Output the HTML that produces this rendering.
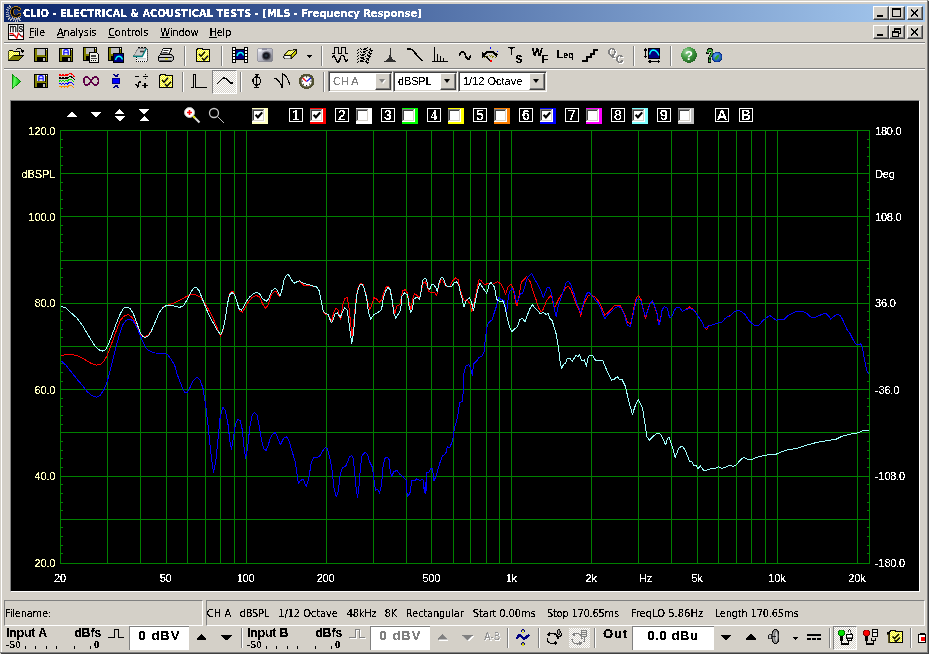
<!DOCTYPE html>
<html><head><meta charset="utf-8"><title>CLIO - ELECTRICAL &amp; ACOUSTICAL TESTS - [MLS - Frequency Response]</title>
<style>
html,body{margin:0;padding:0;background:#d4d0c8;}
body{width:929px;height:654px;position:relative;overflow:hidden;background:#d4d0c8;font-family:"Liberation Sans","DejaVu Sans",sans-serif;font-size:11px;color:#000;}
.a{position:absolute;}
.t{position:absolute;white-space:nowrap;line-height:1;}
.ui,.b12,.b13,.sb,.combo span{filter:url(#crisp);}
.ui{font-family:"DejaVu Sans Condensed","Liberation Sans",sans-serif;font-size:11px;}
.sepv{position:absolute;width:1px;background:#808080;border-right:1px solid #fff;}
.seph{position:absolute;height:1px;background:#808080;border-bottom:1px solid #fff;}
.btn{position:absolute;width:14px;height:12px;background:#d4d0c8;border:1px solid;border-color:#fff #404040 #404040 #fff;box-shadow:inset -1px -1px 0 #808080;}
.white{position:absolute;background:#fff;border-top:1px solid #808080;border-left:1px solid #808080;}
.b13{font-family:"Liberation Sans",sans-serif;font-weight:bold;font-size:13px;}
.b12{font-family:"Liberation Sans",sans-serif;font-weight:bold;font-size:12px;}
.sb{font-family:"Liberation Serif",serif;font-weight:bold;font-size:11px;}
.combo{position:absolute;height:19px;background:#fff;border:1px solid;border-color:#808080 #fff #fff #808080;box-shadow:inset 1px 1px 0 #404040, inset -1px -1px 0 #d4d0c8;}
.cbtn{position:absolute;top:1px;right:1px;width:14px;height:15px;background:#d4d0c8;border:1px solid;border-color:#fff #404040 #404040 #fff;box-shadow:inset -1px -1px 0 #808080;}
.cbtn i{position:absolute;left:3px;top:5px;width:0;height:0;border-left:3.5px solid transparent;border-right:3.5px solid transparent;border-top:4px solid #000;}
.pressed{position:absolute;border:1px solid;border-color:#808080 #fff #fff #808080;background-color:#fff;background-image:linear-gradient(45deg,#d4d0c8 25%,transparent 25%,transparent 75%,#d4d0c8 75%),linear-gradient(45deg,#d4d0c8 25%,transparent 25%,transparent 75%,#d4d0c8 75%);background-size:2px 2px;background-position:0 0,1px 1px;}
svg{position:absolute;overflow:visible;}
u{text-decoration:underline;text-underline-offset:1px;text-decoration-thickness:1px;}
</style></head><body><div id="root" style="position:absolute;left:0;top:0;width:929px;height:654px;will-change:transform;">

<svg width="0" height="0" style="position:absolute"><defs><filter id="crisp" x="-5%" y="-25%" width="110%" height="150%" color-interpolation-filters="sRGB"><feComponentTransfer><feFuncA type="discrete" tableValues="0 0 1 1 1"/></feComponentTransfer></filter></defs></svg>
<div class="a" style="left:0;top:0;width:927px;height:652px;border-right:1px solid #808080;border-bottom:1px solid #808080;box-shadow:1px 1px 0 #404040;"></div>
<div class="a" style="left:1px;top:1px;width:925px;height:650px;border-left:1px solid #fff;border-top:1px solid #fff;"></div>
<div class="a" style="left:4px;top:4px;width:921px;height:18px;background:linear-gradient(to right,#0a246a,#a6caf0);"></div>
<div class="t ui" style="left:23px;top:8px;color:#fff;font-weight:bold;letter-spacing:0.043px" id="title">CLIO - ELECTRICAL &amp; ACOUSTICAL TESTS - [MLS - Frequency Response]</div>
<div class="btn" style="left:873px;top:6px;"></div>
<div class="btn" style="left:873px;top:25px;"></div>
<div class="btn" style="left:889px;top:6px;"></div>
<div class="btn" style="left:889px;top:25px;"></div>
<div class="btn" style="left:907px;top:6px;"></div>
<div class="btn" style="left:907px;top:25px;"></div>
<div class="t ui" style="left:29px;top:27px;letter-spacing:-0.125px" id="m0"><u>F</u>ile</div>
<div class="t ui" style="left:57px;top:27px;letter-spacing:-0.188px" id="m1"><u>A</u>nalysis</div>
<div class="t ui" style="left:108px;top:27px;letter-spacing:-0.075px" id="m2"><u>C</u>ontrols</div>
<div class="t ui" style="left:160.3px;top:27px;letter-spacing:-0.167px" id="m3"><u>W</u>indow</div>
<div class="t ui" style="left:209.5px;top:27px;letter-spacing:-0.275px" id="m4"><u>H</u>elp</div>
<div class="seph" style="left:4px;top:42px;width:921px;"></div>
<div class="seph" style="left:4px;top:68px;width:921px;"></div>
<div class="sepv" style="left:184px;top:46px;height:20px;"></div>
<div class="sepv" style="left:221px;top:46px;height:20px;"></div>
<div class="sepv" style="left:321px;top:46px;height:20px;"></div>
<div class="sepv" style="left:633px;top:46px;height:20px;"></div>
<div class="sepv" style="left:670px;top:46px;height:20px;"></div>
<div class="sepv" style="left:182px;top:72px;height:20px;"></div>
<div class="sepv" style="left:240px;top:72px;height:20px;"></div>
<div class="sepv" style="left:323px;top:72px;height:20px;"></div>
<div class="pressed" style="left:212px;top:70px;width:23px;height:22px;"></div>
<div class="combo" style="left:328px;top:71px;width:63px;"><span class="t" style="left:4px;top:4px;letter-spacing:0px;color:#808080;font-size:11px;" id="c1">CH A</span><div class="cbtn" style="background:#d4d0c8"><i style="border-top-color:#fff;left:4px;top:6px"></i><i style="border-top-color:#808080"></i></div></div>
<div class="combo" style="left:393px;top:71px;width:63px;"><span class="t" style="left:4px;top:4px;letter-spacing:-0.15px;font-size:11px;" id="c2">dBSPL</span><div class="cbtn"><i></i></div></div>
<div class="combo" style="left:458px;top:71px;width:87px;"><span class="t" style="left:4px;top:4px;font-size:11px;" id="c3">1/12 Octave</span><div class="cbtn"><i></i></div></div>
<div class="a" style="left:10px;top:100px;width:908px;height:491px;background:#000;border-left:1px solid #808080;border-top:1px solid #808080;border-right:1px solid #fff;border-bottom:1px solid #fff;box-sizing:content-box;width:908px;height:490px;"></div>
<svg style="left:0;top:0" width="929" height="654" viewBox="0 0 929 654">
<g shape-rendering="crispEdges" stroke="#008000" stroke-width="1" fill="none">
<path d="M60.5 130V564"/>
<path d="M107.5 130V564"/>
<path d="M140.5 130V564"/>
<path d="M166.5 130V564"/>
<path d="M187.5 130V564"/>
<path d="M205.5 130V564"/>
<path d="M220.5 130V564"/>
<path d="M234.5 130V564"/>
<path d="M246.5 130V564"/>
<path d="M326.5 130V564"/>
<path d="M373.5 130V564"/>
<path d="M406.5 130V564"/>
<path d="M431.5 130V564"/>
<path d="M453.5 130V564"/>
<path d="M470.5 130V564"/>
<path d="M486.5 130V564"/>
<path d="M499.5 130V564"/>
<path d="M511.5 130V564"/>
<path d="M591.5 130V564"/>
<path d="M638.5 130V564"/>
<path d="M671.5 130V564"/>
<path d="M697.5 130V564"/>
<path d="M718.5 130V564"/>
<path d="M736.5 130V564"/>
<path d="M751.5 130V564"/>
<path d="M765.5 130V564"/>
<path d="M777.5 130V564"/>
<path d="M857.5 130V564"/>
<path d="M869.5 130V564"/>
<path d="M60 130.5H870"/>
<path d="M60 173.5H870"/>
<path d="M60 216.5H870"/>
<path d="M60 260.5H870"/>
<path d="M60 303.5H870"/>
<path d="M60 346.5H870"/>
<path d="M60 389.5H870"/>
<path d="M60 432.5H870"/>
<path d="M60 476.5H870"/>
<path d="M60 519.5H870"/>
<path d="M60 563.5H870"/>
<path d="M60 139.5H63M867 139.5H870"/>
<path d="M60 147.5H63M867 147.5H870"/>
<path d="M60 156.5H63M867 156.5H870"/>
<path d="M60 165.5H63M867 165.5H870"/>
<path d="M60 182.5H63M867 182.5H870"/>
<path d="M60 190.5H63M867 190.5H870"/>
<path d="M60 199.5H63M867 199.5H870"/>
<path d="M60 208.5H63M867 208.5H870"/>
<path d="M60 225.5H63M867 225.5H870"/>
<path d="M60 234.5H63M867 234.5H870"/>
<path d="M60 242.5H63M867 242.5H870"/>
<path d="M60 251.5H63M867 251.5H870"/>
<path d="M60 268.5H63M867 268.5H870"/>
<path d="M60 277.5H63M867 277.5H870"/>
<path d="M60 286.5H63M867 286.5H870"/>
<path d="M60 294.5H63M867 294.5H870"/>
<path d="M60 311.5H63M867 311.5H870"/>
<path d="M60 320.5H63M867 320.5H870"/>
<path d="M60 329.5H63M867 329.5H870"/>
<path d="M60 337.5H63M867 337.5H870"/>
<path d="M60 355.5H63M867 355.5H870"/>
<path d="M60 363.5H63M867 363.5H870"/>
<path d="M60 372.5H63M867 372.5H870"/>
<path d="M60 381.5H63M867 381.5H870"/>
<path d="M60 398.5H63M867 398.5H870"/>
<path d="M60 406.5H63M867 406.5H870"/>
<path d="M60 415.5H63M867 415.5H870"/>
<path d="M60 424.5H63M867 424.5H870"/>
<path d="M60 441.5H63M867 441.5H870"/>
<path d="M60 450.5H63M867 450.5H870"/>
<path d="M60 458.5H63M867 458.5H870"/>
<path d="M60 467.5H63M867 467.5H870"/>
<path d="M60 484.5H63M867 484.5H870"/>
<path d="M60 493.5H63M867 493.5H870"/>
<path d="M60 502.5H63M867 502.5H870"/>
<path d="M60 510.5H63M867 510.5H870"/>
<path d="M60 527.5H63M867 527.5H870"/>
<path d="M60 536.5H63M867 536.5H870"/>
<path d="M60 545.5H63M867 545.5H870"/>
<path d="M60 553.5H63M867 553.5H870"/>
</g>
<polyline points="60.8,355.4 67.2,354.5 73.3,354.7 79.5,356.5 85.6,360.0 91.7,363.7 96.3,365.2 100.9,364.2 103.9,361.1 107.0,355.7 110.0,348.1 113.9,337.4 117.7,326.7 120.7,319.8 123.8,316.3 128.1,314.5 131.5,316.8 134.5,321.3 138.3,329.8 141.4,335.1 144.4,336.6 147.5,335.4 151.3,331.3 155.2,322.1 159.0,312.9 162.8,307.6 165.1,306.0 169.7,304.5 175.8,302.2 181.9,298.9 188.0,295.8 190.0,294.4 195.4,294.8 199.9,297.0 203.8,301.6 207.6,307.8 212.2,316.2 216.8,326.9 220.6,336.0 222.9,330.5 225.2,319.2 227.5,303.9 229.4,294.5 231.3,291.7 233.6,291.7 236.6,300.9 239.7,310.8 242.3,312.3 245.0,307.8 248.9,300.9 252.7,297.0 256.5,295.5 259.6,297.0 262.6,303.9 265.7,308.5 268.3,304.7 271.0,295.5 274.1,291.7 276.4,291.7 279.4,297.0 281.7,290.9 284.0,280.2 286.3,275.2 288.3,274.4 290.9,278.7 294.0,283.3 297.0,281.8 299.3,280.7 303.9,285.3 308.5,285.3 313.9,286.3 316.9,287.1 319.2,290.9 321.2,300.9 323.0,310.0 324.6,313.9 328.8,315.4 331.4,322.0 333.4,313.9 335.7,308.2 338.0,310.0 340.7,320.0 342.6,305.5 344.6,298.6 347.2,297.5 348.7,305.5 350.2,319.2 352.2,337.6 354.0,319.2 356.0,299.3 357.9,287.9 360.9,283.3 363.2,284.8 366.3,295.5 368.6,305.5 369.8,309.7 371.6,305.5 373.9,297.8 376.2,298.6 379.3,302.4 381.9,299.3 383.9,292.5 386.2,287.1 388.5,286.3 390.8,291.7 392.6,302.4 394.6,313.9 396.9,306.2 399.9,304.7 401.5,296.3 403.0,290.2 405.3,289.9 407.6,293.2 409.1,302.4 410.9,310.0 412.5,299.3 414.4,293.5 416.7,295.1 419.5,297.8 421.3,290.2 423.2,283.3 425.2,281.8 426.7,284.8 429.0,291.7 432.0,292.5 435.1,292.9 436.6,295.5 438.9,285.6 441.2,279.5 443.5,281.8 446.1,286.3 449.6,286.8 452.7,281.0 455.7,277.9 458.0,279.5 459.9,288.6 463.1,298.6 464.6,300.9 466.9,299.3 469.9,303.9 471.9,311.9 474.5,300.9 476.8,290.2 479.1,279.5 481.4,281.0 484.5,284.8 488.3,283.3 492.9,284.1 497.5,281.8 501.3,284.1 503.6,289.4 505.6,294.0 508.2,286.3 511.2,284.4 513.5,289.4 515.4,301.6 516.9,306.2 518.9,296.3 521.2,282.5 524.2,279.5 526.5,276.4 528.0,278.7 530.3,281.8 532.6,290.2 535.7,298.6 538.7,307.8 541.0,312.3 543.3,309.3 546.4,300.9 549.4,297.0 551.4,295.1 553.0,302.4 554.5,308.5 556.3,303.9 559.4,297.8 562.4,293.2 565.5,287.9 568.3,286.3 570.9,289.4 573.9,297.8 577.0,306.2 579.3,310.0 580.8,316.2 582.3,308.5 584.6,302.4 587.7,296.3 590.7,294.8 593.8,296.3 595.0,297.1 598.8,301.6 602.0,308.5 604.8,315.2 608.0,312.5 611.6,309.0 614.6,305.4 619.9,305.0 622.5,309.5 625.0,315.5 627.4,322.0 630.4,324.2 632.0,318.0 634.5,305.0 636.4,298.0 638.7,295.3 641.0,299.5 643.2,308.5 645.5,319.0 647.7,310.0 650.0,303.0 652.3,301.0 654.5,306.0 656.8,313.0 658.3,322.7 660.6,319.0 662.1,309.9 664.3,306.5 667.3,308.4 669.6,317.9 671.9,316.7 674.1,310.7 676.4,307.4 679.4,307.4 682.4,311.4 685.4,309.9 689.2,306.9 693.0,309.0 696.0,312.9 699.0,317.5 702.0,322.0 704.3,327.3 706.5,329.5 708.8,326.0 711.8,325.0 714.8,324.2 718.6,322.7 721.6,322.7 724.6,319.0 727.6,316.7 730.6,315.2 733.1,312.9 736.9,310.2 740.7,311.1 745.3,314.5 748.3,319.8 751.4,322.9 754.5,325.5 759.1,325.2 762.1,321.3 766.7,317.5 769.8,315.5 772.8,317.8 775.9,320.1 780.5,319.5 784.3,319.1 787.3,316.0 791.2,313.7 795.7,311.7 802.6,311.4 806.5,313.2 811.0,317.2 815.6,317.2 820.2,315.2 823.3,313.7 825.6,313.2 828.6,316.0 830.6,319.1 833.2,316.8 837.0,314.5 840.1,315.2 842.4,319.1 844.7,324.4 847.0,329.4 850.0,333.6 852.3,338.2 855.4,343.8 858.4,344.6 860.7,343.8 862.3,347.3 863.8,355.7 865.3,363.4 866.9,371.0 868.4,374.1" fill="none" stroke="#ff0000" stroke-width="1" stroke-linejoin="round" shape-rendering="crispEdges"/>
<polyline points="60.8,360.6 65.7,364.9 71.8,372.6 77.9,380.2 82.5,385.4 86.3,390.7 90.9,395.0 96.3,397.3 100.1,395.3 103.9,389.9 107.0,382.3 110.8,368.0 113.9,355.7 116.9,343.5 120.0,332.8 123.0,324.4 126.1,320.3 129.9,319.4 133.0,320.6 136.0,325.9 139.1,332.8 142.9,342.0 146.7,348.9 150.6,351.5 155.2,353.0 162.0,353.1 167.4,354.2 171.2,359.6 174.6,364.9 176.6,372.6 179.6,381.0 182.7,388.4 184.7,392.2 187.3,392.2 190.3,386.9 193.0,380.9 197.0,377.4 199.9,379.9 202.9,387.9 205.5,403.8 208.3,427.7 210.9,453.5 213.5,472.4 215.8,461.5 218.2,437.6 220.2,416.7 222.8,407.4 225.4,410.8 227.8,422.7 229.8,440.6 231.4,449.5 233.3,438.6 235.3,424.7 237.7,419.3 240.3,420.7 242.3,429.7 244.1,447.5 245.7,458.1 247.7,447.5 249.7,427.7 252.0,415.7 254.2,412.4 257.0,414.7 259.2,425.7 261.2,438.6 263.6,448.5 266.2,450.5 268.1,445.6 270.5,437.6 273.1,433.6 275.5,432.6 277.9,438.6 280.5,444.6 283.5,438.6 286.4,436.6 289.0,440.6 292.4,452.5 295.4,462.5 298.4,483.3 300.4,480.4 303.3,479.4 306.3,486.9 308.9,477.4 311.3,462.5 313.7,457.5 319.3,456.9 322.2,451.5 325.2,447.5 327.3,448.9 329.6,456.6 331.9,468.8 333.9,487.2 336.2,497.1 338.5,490.2 340.3,473.4 342.6,467.7 345.6,466.5 347.9,461.2 349.5,456.6 351.8,455.8 353.3,458.9 354.8,473.4 356.3,490.2 357.6,497.1 358.9,487.2 360.5,467.3 362.0,455.8 365.1,452.4 367.8,455.0 369.3,461.2 372.4,467.3 373.9,479.5 375.5,490.2 377.8,489.4 379.6,493.3 381.6,484.1 383.1,465.7 384.9,458.4 386.9,457.3 388.9,458.4 390.0,468.8 391.5,476.9 393.8,471.9 396.9,470.3 399.9,474.2 403.0,476.5 406.0,480.3 407.3,496.3 409.9,493.3 411.9,480.3 415.2,480.7 416.7,478.7 419.8,480.3 422.9,479.5 424.4,492.5 425.5,482.6 425.9,494.0 426.7,472.6 429.0,471.9 430.5,468.8 432.5,468.5 433.9,481.0 435.9,476.5 438.1,468.8 440.4,461.2 442.7,455.8 445.8,453.5 447.3,446.6 449.6,447.7 452.7,440.5 454.2,429.1 456.5,421.4 458.1,413.4 459.6,402.7 462.3,401.2 463.4,390.5 463.9,373.6 465.7,366.0 468.8,364.5 471.1,369.8 472.3,375.2 473.7,363.7 476.4,361.4 478.7,357.6 481.8,356.5 484.1,351.5 485.2,340.6 487.2,325.3 489.8,321.5 492.1,320.0 494.4,312.3 496.7,305.5 499.0,297.0 501.0,299.3 504.3,300.9 506.6,313.1 507.7,302.4 509.2,292.5 512.0,288.6 514.3,291.7 516.6,302.4 518.9,298.6 520.4,293.2 522.7,293.2 525.0,285.6 527.3,277.9 531.6,273.3 534.9,279.5 538.0,284.8 540.3,289.4 543.3,297.8 545.6,291.7 547.2,287.9 549.4,287.6 551.0,291.7 553.0,300.9 554.8,311.6 556.3,316.9 557.9,307.0 560.9,298.6 564.0,289.4 566.3,282.5 568.6,281.3 570.9,284.8 573.9,293.2 577.0,303.9 579.3,308.5 580.8,313.1 582.3,307.0 584.6,299.3 586.9,293.2 589.2,292.5 591.5,295.5 594.6,298.6 595.0,300.1 598.0,302.4 601.0,309.2 603.3,315.2 604.8,319.0 607.8,314.5 611.6,311.4 615.3,307.7 618.4,306.2 621.4,308.4 624.4,315.2 627.4,325.0 630.4,327.0 631.9,319.7 634.2,309.2 636.4,300.1 638.7,298.6 641.0,300.9 643.2,309.9 645.5,316.7 647.7,310.7 650.0,303.9 652.3,300.9 654.5,305.4 656.8,312.2 659.0,325.0 660.6,319.7 662.1,309.9 664.3,306.5 667.3,308.4 669.6,317.9 671.9,316.7 674.1,310.7 676.4,307.4 679.4,307.4 682.4,311.4 685.4,309.9 689.2,308.4 693.0,309.5 696.0,312.9 699.0,317.5 702.0,322.0 704.3,327.3 706.5,328.0 708.8,325.0 711.8,325.0 714.8,324.2 718.6,322.7 721.6,322.7 724.6,319.0 727.6,316.7 730.0,316.0 733.1,312.9 736.9,310.2 740.7,311.1 745.3,314.5 748.3,319.8 751.4,322.9 754.5,325.5 759.1,325.2 762.1,321.3 766.7,317.5 769.8,315.5 772.8,317.8 775.9,320.1 780.5,319.5 784.3,319.1 787.3,316.0 791.2,313.7 795.7,311.7 802.6,311.4 806.5,313.2 811.0,317.2 815.6,317.2 820.2,315.2 823.3,313.7 825.6,313.2 828.6,316.0 830.6,319.1 833.2,316.8 837.0,314.5 840.1,315.2 842.4,319.1 844.7,324.4 847.0,329.4 850.0,333.6 852.3,338.2 855.4,343.8 858.4,344.6 860.7,343.8 862.3,347.3 863.8,355.7 865.3,363.4 866.9,371.0 868.4,374.1" fill="none" stroke="#0000ff" stroke-width="1" stroke-linejoin="round" shape-rendering="crispEdges"/>
<polyline points="60.8,306.1 65.7,308.0 70.3,312.2 76.4,317.5 82.5,325.5 88.6,335.9 94.8,345.8 98.6,349.6 102.1,351.2 105.5,349.6 108.5,344.3 112.3,334.3 116.2,323.6 120.7,312.9 123.8,308.0 126.9,307.1 129.9,308.3 133.0,312.9 136.8,322.9 139.9,332.0 142.9,336.6 145.2,337.4 148.3,335.9 151.3,331.3 155.2,322.1 159.0,312.9 162.8,307.6 166.6,305.3 171.2,305.0 175.8,306.5 179.6,307.3 183.4,306.0 186.5,300.7 189.6,294.6 193.1,288.6 196.1,287.1 199.2,290.9 202.2,298.6 205.3,306.2 208.3,313.9 212.9,322.3 217.5,330.7 220.6,334.5 222.9,329.9 225.2,319.2 227.5,303.9 229.4,295.1 232.0,292.5 234.3,294.4 236.6,300.9 238.9,308.5 241.2,310.4 243.5,307.0 246.6,300.9 249.6,297.0 253.5,293.5 256.5,292.2 259.6,294.0 262.6,298.6 266.1,301.3 268.7,298.6 271.8,290.9 274.9,288.2 277.2,290.2 279.9,296.0 281.7,290.9 284.0,280.2 286.3,275.2 288.3,274.4 290.9,278.7 294.0,283.3 297.0,281.8 299.3,280.7 303.1,283.3 309.3,284.8 313.9,286.3 316.9,287.1 319.2,290.9 321.2,300.9 323.0,310.0 324.6,312.8 328.1,314.6 331.4,323.0 333.4,319.2 334.9,313.9 337.2,312.8 340.3,317.4 342.6,311.6 344.9,307.8 347.2,310.0 349.5,326.9 351.8,343.4 353.7,331.5 355.3,310.0 357.1,293.2 359.4,285.6 361.7,284.1 364.0,287.9 366.6,297.8 368.6,313.1 370.6,319.2 373.9,314.6 377.8,312.8 381.6,309.3 383.1,299.3 385.4,291.7 387.7,287.4 390.0,289.4 392.3,300.9 393.8,313.1 395.6,318.0 398.4,313.9 400.7,309.3 401.9,296.3 404.5,292.9 407.6,295.1 409.1,307.0 410.9,312.3 412.5,308.5 413.7,299.3 416.7,297.0 419.5,299.3 421.0,291.7 422.6,281.0 424.4,278.2 426.7,279.2 427.8,287.9 429.7,289.4 431.3,284.8 433.6,284.4 435.9,287.9 437.4,291.7 439.4,281.0 441.2,277.6 443.5,278.2 445.8,285.6 448.9,287.1 451.9,286.3 454.2,282.5 456.5,281.8 458.8,284.8 460.3,292.5 462.3,299.3 463.8,307.0 466.1,300.9 469.5,297.5 471.5,302.4 473.5,310.8 475.3,300.9 477.6,290.2 479.9,283.3 482.9,287.9 486.8,293.2 489.1,284.8 491.0,282.5 494.4,287.1 496.7,299.3 499.8,301.6 502.8,300.9 505.1,307.0 507.4,319.2 509.7,326.9 511.7,331.9 514.3,329.2 517.3,326.9 519.6,320.0 522.7,318.1 525.0,322.3 527.3,315.4 530.3,307.8 532.3,304.7 534.9,307.8 538.0,310.8 540.3,313.9 543.3,312.3 546.4,314.6 548.4,313.1 549.4,317.7 552.2,320.7 554.0,326.9 556.3,334.5 557.6,343.0 558.7,349.2 560.2,362.9 561.6,368.3 563.6,364.2 565.4,363.7 566.9,359.1 569.7,358.3 572.4,361.4 575.8,355.3 578.1,356.5 579.6,354.5 581.6,360.6 584.2,359.9 586.5,366.8 587.7,358.3 589.6,355.3 592.6,355.0 595.4,360.3 602.8,360.8 607.1,371.0 611.4,380.2 614.6,379.0 617.4,376.4 618.9,379.2 622.1,379.6 625.3,386.0 628.5,399.9 632.4,414.5 635.4,405.3 638.2,399.5 642.4,407.4 644.6,421.3 646.7,436.3 649.5,440.2 653.2,436.3 657.4,433.1 660.6,434.2 663.9,440.6 665.6,444.9 667.5,438.5 669.2,437.4 672.4,447.0 675.2,457.3 678.8,448.1 682.1,446.0 685.3,450.3 687.4,455.6 689.6,462.0 691.7,461.6 693.8,465.9 696.0,465.2 698.1,468.5 700.3,465.9 703.5,470.2 706.7,470.2 711.0,468.5 715.2,468.5 718.5,466.7 721.7,468.5 724.9,467.5 729.8,465.4 733.1,466.5 736.3,464.9 739.5,460.9 743.6,457.3 747.6,459.2 751.6,459.6 755.7,457.6 765.4,455.2 777.5,453.9 781.5,451.7 789.6,449.2 796.0,448.8 805.7,445.5 817.0,442.3 825.1,441.0 836.4,439.1 841.3,436.6 849.3,434.2 857.7,432.9 862.3,431.0 868.7,430.3" fill="none" stroke="#a0ffff" stroke-width="1" stroke-linejoin="round" shape-rendering="crispEdges"/>
<g font-family="Liberation Sans, sans-serif" font-size="11px" letter-spacing="-0.2" filter="url(#crisp)">
<text x="55.4" y="134.6" text-anchor="end" fill="#ffffc0" letter-spacing="-0.1">120.0</text>
<text x="875" y="134.6" fill="#fff">180.0</text>
<text x="55.4" y="221.0" text-anchor="end" fill="#ffffc0" letter-spacing="-0.1">100.0</text>
<text x="875" y="221.0" fill="#fff">108.0</text>
<text x="55.4" y="307.4" text-anchor="end" fill="#ffffc0" letter-spacing="-0.1">80.0</text>
<text x="875" y="307.4" fill="#fff">36.0</text>
<text x="55.4" y="393.8" text-anchor="end" fill="#ffffc0" letter-spacing="-0.1">60.0</text>
<text x="875" y="393.8" fill="#fff">-36.0</text>
<text x="55.4" y="480.2" text-anchor="end" fill="#ffffc0" letter-spacing="-0.1">40.0</text>
<text x="875" y="480.2" fill="#fff">-108.0</text>
<text x="55.4" y="566.6" text-anchor="end" fill="#ffffc0" letter-spacing="-0.1">20.0</text>
<text x="875" y="566.6" fill="#fff">-180.0</text>
<text x="55.2" y="177.8" text-anchor="end" fill="#ffffc0" letter-spacing="-0.1">dBSPL</text>
<text x="875" y="177.8" fill="#fff">Deg</text>
<text x="59.9" y="582" text-anchor="middle" fill="#fff">20</text>
<text x="165.6" y="582" text-anchor="middle" fill="#fff">50</text>
<text x="245.6" y="582" text-anchor="middle" fill="#fff">100</text>
<text x="325.6" y="582" text-anchor="middle" fill="#fff">200</text>
<text x="431.3" y="582" text-anchor="middle" fill="#fff">500</text>
<text x="511.3" y="582" text-anchor="middle" fill="#fff">1k</text>
<text x="591.2" y="582" text-anchor="middle" fill="#fff">2k</text>
<text x="645.5" y="582" text-anchor="middle" fill="#fff">Hz</text>
<text x="697.0" y="582" text-anchor="middle" fill="#fff">5k</text>
<text x="776.9" y="582" text-anchor="middle" fill="#fff">10k</text>
<text x="856.9" y="582" text-anchor="middle" fill="#fff">20k</text>
</g>
<g fill="#fff" shape-rendering="crispEdges">
<path d="M66.800 117h10.600l-5.300-5.300z"/><path d="M90.800 112h10.600l-5.300 5.300z"/>
<path d="M114.700 114.300h10.600l-5.300-5.300z"/><path d="M114.700 116h10.600l-5.300 5.300z"/>
<path d="M138.800 109h10.600l-5.300 5.300z"/><path d="M138.800 121.300h10.600l-5.300-5.300z"/>
</g>
<circle cx="189.5" cy="112.5" r="5" fill="#fff" stroke="#c0c0c0" stroke-width="1"/><path d="M187 112.5h5M189.5 110v5" stroke="#f00" stroke-width="1.6"/><path d="M193.5 116.5l6 6" stroke="#e0e0e0" stroke-width="2"/><path d="M193 116l2 2" stroke="#e0e000" stroke-width="2"/>
<circle cx="214" cy="113" r="4.5" fill="none" stroke="#c8c8c8" stroke-width="1.3"/><path d="M217.5 116.5l6.5 6.5" stroke="#c0c0c0" stroke-width="1"/>
<rect x="252" y="108" width="16" height="16" fill="#ffffc0" shape-rendering="crispEdges"/>
<g shape-rendering="crispEdges" fill="none"><rect x="252" y="109" width="13" height="13" fill="#fff"/><path d="M252.5 121V109.5H264" stroke="#808080"/><path d="M253.5 120V110.5H263" stroke="#404040"/><path d="M253 120.5H263.5V110" stroke="#d4d0c8"/></g>
<path d="M255.6 114.7l2.300 2.600l4.300-4.900" stroke="#000" stroke-width="2.100" fill="none"/>
<rect x="289.5" y="108.5" width="13" height="13" fill="#000" stroke="#fff" shape-rendering="crispEdges"/>
<text x="296" y="120.1" text-anchor="middle" fill="#fff" filter="url(#crisp)" font-family="Liberation Sans, sans-serif" font-size="14px" font-weight="normal" stroke="#fff" stroke-width="0.15">1</text>
<rect x="310" y="108" width="16" height="16" fill="#ff0000" shape-rendering="crispEdges"/>
<g shape-rendering="crispEdges" fill="none"><rect x="310" y="109" width="13" height="13" fill="#fff"/><path d="M310.5 121V109.5H322" stroke="#808080"/><path d="M311.5 120V110.5H321" stroke="#404040"/><path d="M311 120.5H321.5V110" stroke="#d4d0c8"/></g>
<path d="M313.6 114.7l2.300 2.600l4.300-4.900" stroke="#000" stroke-width="2.100" fill="none"/>
<rect x="335.5" y="108.5" width="13" height="13" fill="#000" stroke="#fff" shape-rendering="crispEdges"/>
<text x="342" y="120.1" text-anchor="middle" fill="#fff" filter="url(#crisp)" font-family="Liberation Sans, sans-serif" font-size="14px" font-weight="normal" stroke="#fff" stroke-width="0.15">2</text>
<rect x="356" y="108" width="16" height="16" fill="#ffffff" shape-rendering="crispEdges"/>
<g shape-rendering="crispEdges" fill="none"><rect x="356" y="109" width="13" height="13" fill="#fff"/><path d="M356.5 121V109.5H368" stroke="#808080"/><path d="M357.5 120V110.5H367" stroke="#404040"/><path d="M357 120.5H367.5V110" stroke="#d4d0c8"/></g>
<rect x="381.5" y="108.5" width="13" height="13" fill="#000" stroke="#fff" shape-rendering="crispEdges"/>
<text x="388" y="120.1" text-anchor="middle" fill="#fff" filter="url(#crisp)" font-family="Liberation Sans, sans-serif" font-size="14px" font-weight="normal" stroke="#fff" stroke-width="0.15">3</text>
<rect x="402" y="108" width="16" height="16" fill="#00ff00" shape-rendering="crispEdges"/>
<g shape-rendering="crispEdges" fill="none"><rect x="402" y="109" width="13" height="13" fill="#fff"/><path d="M402.5 121V109.5H414" stroke="#808080"/><path d="M403.5 120V110.5H413" stroke="#404040"/><path d="M403 120.5H413.5V110" stroke="#d4d0c8"/></g>
<rect x="427.5" y="108.5" width="13" height="13" fill="#000" stroke="#fff" shape-rendering="crispEdges"/>
<text x="434" y="120.1" text-anchor="middle" fill="#fff" filter="url(#crisp)" font-family="Liberation Serif, serif" font-size="14px" font-weight="bold" stroke="#fff" stroke-width="0">4</text>
<rect x="448" y="108" width="16" height="16" fill="#ffff00" shape-rendering="crispEdges"/>
<g shape-rendering="crispEdges" fill="none"><rect x="448" y="109" width="13" height="13" fill="#fff"/><path d="M448.5 121V109.5H460" stroke="#808080"/><path d="M449.5 120V110.5H459" stroke="#404040"/><path d="M449 120.5H459.5V110" stroke="#d4d0c8"/></g>
<rect x="473.5" y="108.5" width="13" height="13" fill="#000" stroke="#fff" shape-rendering="crispEdges"/>
<text x="480" y="120.1" text-anchor="middle" fill="#fff" filter="url(#crisp)" font-family="Liberation Sans, sans-serif" font-size="14px" font-weight="normal" stroke="#fff" stroke-width="0.15">5</text>
<rect x="494" y="108" width="16" height="16" fill="#ff8000" shape-rendering="crispEdges"/>
<g shape-rendering="crispEdges" fill="none"><rect x="494" y="109" width="13" height="13" fill="#fff"/><path d="M494.5 121V109.5H506" stroke="#808080"/><path d="M495.5 120V110.5H505" stroke="#404040"/><path d="M495 120.5H505.5V110" stroke="#d4d0c8"/></g>
<rect x="519.5" y="108.5" width="13" height="13" fill="#000" stroke="#fff" shape-rendering="crispEdges"/>
<text x="526" y="120.1" text-anchor="middle" fill="#fff" filter="url(#crisp)" font-family="Liberation Sans, sans-serif" font-size="14px" font-weight="normal" stroke="#fff" stroke-width="0.15">6</text>
<rect x="540" y="108" width="16" height="16" fill="#0000ff" shape-rendering="crispEdges"/>
<g shape-rendering="crispEdges" fill="none"><rect x="540" y="109" width="13" height="13" fill="#fff"/><path d="M540.5 121V109.5H552" stroke="#808080"/><path d="M541.5 120V110.5H551" stroke="#404040"/><path d="M541 120.5H551.5V110" stroke="#d4d0c8"/></g>
<path d="M543.6 114.7l2.300 2.600l4.300-4.900" stroke="#000" stroke-width="2.100" fill="none"/>
<rect x="565.5" y="108.5" width="13" height="13" fill="#000" stroke="#fff" shape-rendering="crispEdges"/>
<text x="572" y="120.1" text-anchor="middle" fill="#fff" filter="url(#crisp)" font-family="Liberation Sans, sans-serif" font-size="14px" font-weight="normal" stroke="#fff" stroke-width="0.15">7</text>
<rect x="586" y="108" width="16" height="16" fill="#ff00ff" shape-rendering="crispEdges"/>
<g shape-rendering="crispEdges" fill="none"><rect x="586" y="109" width="13" height="13" fill="#fff"/><path d="M586.5 121V109.5H598" stroke="#808080"/><path d="M587.5 120V110.5H597" stroke="#404040"/><path d="M587 120.5H597.5V110" stroke="#d4d0c8"/></g>
<rect x="611.5" y="108.5" width="13" height="13" fill="#000" stroke="#fff" shape-rendering="crispEdges"/>
<text x="618" y="120.1" text-anchor="middle" fill="#fff" filter="url(#crisp)" font-family="Liberation Sans, sans-serif" font-size="14px" font-weight="normal" stroke="#fff" stroke-width="0.15">8</text>
<rect x="632" y="108" width="16" height="16" fill="#80ffff" shape-rendering="crispEdges"/>
<g shape-rendering="crispEdges" fill="none"><rect x="632" y="109" width="13" height="13" fill="#fff"/><path d="M632.5 121V109.5H644" stroke="#808080"/><path d="M633.5 120V110.5H643" stroke="#404040"/><path d="M633 120.5H643.5V110" stroke="#d4d0c8"/></g>
<path d="M635.6 114.7l2.300 2.600l4.300-4.900" stroke="#000" stroke-width="2.100" fill="none"/>
<rect x="657.5" y="108.5" width="13" height="13" fill="#000" stroke="#fff" shape-rendering="crispEdges"/>
<text x="664" y="120.1" text-anchor="middle" fill="#fff" filter="url(#crisp)" font-family="Liberation Sans, sans-serif" font-size="14px" font-weight="normal" stroke="#fff" stroke-width="0.15">9</text>
<rect x="678" y="108" width="16" height="16" fill="#c0c0c0" shape-rendering="crispEdges"/>
<g shape-rendering="crispEdges" fill="none"><rect x="678" y="109" width="13" height="13" fill="#fff"/><path d="M678.5 121V109.5H690" stroke="#808080"/><path d="M679.5 120V110.5H689" stroke="#404040"/><path d="M679 120.5H689.5V110" stroke="#d4d0c8"/></g>
<rect x="715.5" y="108.5" width="13" height="13" fill="#000" stroke="#fff" shape-rendering="crispEdges"/>
<text x="722" y="120.1" text-anchor="middle" fill="#fff" filter="url(#crisp)" font-family="Liberation Sans, sans-serif" font-size="14px" font-weight="normal" stroke="#fff" stroke-width="0.15">A</text>
<rect x="739.5" y="108.5" width="13" height="13" fill="#000" stroke="#fff" shape-rendering="crispEdges"/>
<text x="746" y="120.1" text-anchor="middle" fill="#fff" filter="url(#crisp)" font-family="Liberation Sans, sans-serif" font-size="14px" font-weight="normal" stroke="#fff" stroke-width="0.15">B</text>
</svg>
<div class="a" style="left:4px;top:600px;width:198px;height:25px;border:1px solid;border-color:#808080 #fff #fff #808080;box-sizing:content-box;width:197px;height:24px;"></div>
<div class="a" style="left:206px;top:600px;width:717px;height:24px;border:1px solid;border-color:#808080 #fff #fff #808080;"></div>
<div class="t ui" style="left:5px;top:608px;letter-spacing:-0.211px" id="s0">Filename:</div>
<div class="t ui" style="left:206.8px;top:608px;letter-spacing:0.050px" id="s1">CH A</div>
<div class="t ui" style="left:239.8px;top:608px;letter-spacing:-0.320px" id="s2">dBSPL</div>
<div class="t ui" style="left:278.2px;top:608px;letter-spacing:-0.082px" id="s3">1/12 Octave</div>
<div class="t ui" style="left:346.8px;top:608px;letter-spacing:-0.320px" id="s4">48kHz</div>
<div class="t ui" style="left:384.6px;top:608px;letter-spacing:-0.100px" id="s5">8K</div>
<div class="t ui" style="left:405.8px;top:608px;letter-spacing:-0.155px" id="s6">Rectangular</div>
<div class="t ui" style="left:472.8px;top:608px;letter-spacing:-0.125px" id="s7">Start 0.00ms</div>
<div class="t ui" style="left:546.9px;top:608px;letter-spacing:-0.231px" id="s8">Stop 170.65ms</div>
<div class="t ui" style="left:630.7px;top:608px;letter-spacing:0.054px" id="s9">FreqLO 5.86Hz</div>
<div class="t ui" style="left:714.7px;top:608px;letter-spacing:-0.200px" id="s10">Length 170.65ms</div>
<div class="t b12" style="left:6px;top:627px;">Input A</div>
<div class="t b12" style="left:74.5px;top:627px;">dBfs</div>
<div class="t sb" style="left:6px;top:639px;">-50</div>
<div class="t sb" style="left:94px;top:639px;">0</div>
<div class="a" style="left:25px;top:646px;width:1px;height:3px;background:#000;"></div>
<div class="a" style="left:35px;top:646px;width:1px;height:3px;background:#000;"></div>
<div class="a" style="left:46px;top:646px;width:1px;height:3px;background:#000;"></div>
<div class="a" style="left:56px;top:646px;width:1px;height:3px;background:#000;"></div>
<div class="a" style="left:74px;top:646px;width:1px;height:3px;background:#000;"></div>
<div class="a" style="left:90px;top:646px;width:1px;height:3px;background:#000;"></div>
<div class="white" style="left:129px;top:626px;width:59px;height:23px;"></div>
<div class="t b13" style="left:129px;top:628.5px;width:61px;text-align:center;color:#000;letter-spacing:1px;">0 dBV</div>
<div class="t b12" style="left:247px;top:627px;">Input B</div>
<div class="t b12" style="left:315.5px;top:627px;">dBfs</div>
<div class="t sb" style="left:247px;top:639px;">-50</div>
<div class="t sb" style="left:335px;top:639px;">0</div>
<div class="a" style="left:266px;top:646px;width:1px;height:3px;background:#000;"></div>
<div class="a" style="left:276px;top:646px;width:1px;height:3px;background:#000;"></div>
<div class="a" style="left:287px;top:646px;width:1px;height:3px;background:#000;"></div>
<div class="a" style="left:297px;top:646px;width:1px;height:3px;background:#000;"></div>
<div class="a" style="left:315px;top:646px;width:1px;height:3px;background:#000;"></div>
<div class="a" style="left:331px;top:646px;width:1px;height:3px;background:#000;"></div>
<div class="white" style="left:370px;top:626px;width:59px;height:23px;"></div>
<div class="t b13" style="left:370px;top:628.5px;width:61px;text-align:center;color:#808080;letter-spacing:1px;">0 dBV</div>
<div class="sepv" style="left:241px;top:628px;height:20px;"></div>
<div class="sepv" style="left:507px;top:628px;height:20px;"></div>
<div class="sepv" style="left:538px;top:628px;height:20px;"></div>
<div class="sepv" style="left:594px;top:628px;height:20px;"></div>
<div class="sepv" style="left:829px;top:628px;height:20px;"></div>
<div class="sepv" style="left:910px;top:628px;height:20px;"></div>
<div class="t b13" style="left:603px;top:627px;letter-spacing:0.8px;">Out</div>
<div class="white" style="left:632px;top:626px;width:81px;height:23px;"></div>
<div class="t b13" style="left:633px;top:629px;width:80px;text-align:center;letter-spacing:0.6px;">0.0 dBu</div>
<div class="pressed" style="left:568px;top:627px;width:21px;height:20px;border-color:#d4d0c8;"></div>
<div class="pressed" style="left:833px;top:626px;width:22px;height:22px;"></div>
<svg style="left:0;top:0" width="929" height="654" viewBox="0 0 929 654">
<defs>
<filter id="crispi" filterUnits="userSpaceOnUse" x="0" y="0" width="929" height="654" color-interpolation-filters="sRGB"><feComponentTransfer><feFuncA type="discrete" tableValues="0 0 0 0 0 1 1 1 1 1"/></feComponentTransfer></filter>
<pattern id="dy" width="2" height="2" patternUnits="userSpaceOnUse"><rect width="2" height="2" fill="#ffff00"/><rect width="1" height="1" fill="#f0f0d0"/><rect x="1" y="1" width="1" height="1" fill="#f0f0d0"/></pattern>
<linearGradient id="gplay" x1="0" y1="0" x2="1" y2="0.3"><stop offset="0" stop-color="#00a000"/><stop offset="0.35" stop-color="#60ff60"/><stop offset="1" stop-color="#00b800"/></linearGradient>
<radialGradient id="ghelp" cx="0.35" cy="0.3" r="0.8"><stop offset="0" stop-color="#a0d8a0"/><stop offset="0.5" stop-color="#409840"/><stop offset="1" stop-color="#1c5c1c"/></radialGradient>
<linearGradient id="gcam" x1="0" y1="0" x2="1" y2="1"><stop offset="0" stop-color="#e8e8f0"/><stop offset="0.5" stop-color="#b8b8c4"/><stop offset="1" stop-color="#787880"/></linearGradient>
<radialGradient id="glens" cx="0.45" cy="0.45" r="0.6"><stop offset="0" stop-color="#304050"/><stop offset="0.5" stop-color="#101018"/><stop offset="1" stop-color="#505058"/></radialGradient>
<radialGradient id="gglobe" cx="0.4" cy="0.35" r="0.7"><stop offset="0" stop-color="#60b0ff"/><stop offset="1" stop-color="#0030a0"/></radialGradient>
</defs><g filter="url(#crispi)">
<g><path d="M8.5 60.5V51.5L9.5 50.5H12.5L13.5 51.5H19.5V55" fill="url(#dy)" stroke="#000"/><path d="M8.5 60.5H18.5L23.5 55.5H13.5Z" fill="#808000" stroke="#000"/><path d="M8.7 51.5V60.3L13.2 55.5V51.8Z" fill="url(#dy)"/><path d="M16.300 49.800Q19.500 46.500 22.300 50" fill="none" stroke="#000" stroke-width="1.100"/><path d="M20.300 50.500h4l-1.800 2.800z" fill="#000"/></g>
<g shape-rendering="crispEdges"><rect x="34" y="48" width="14" height="14" fill="#000"/><rect x="35" y="49" width="12" height="12" fill="#808000"/><rect x="37" y="49" width="8" height="6" fill="#c0c0c0"/><rect x="45" y="49" width="1" height="7" fill="#000"/><rect x="46" y="49" width="1" height="1" fill="#fff"/><rect x="37" y="57" width="9" height="4" fill="#000"/><rect x="43" y="58" width="2" height="3" fill="#c0c0c0"/></g>
<g shape-rendering="crispEdges"><rect x="59" y="48" width="14" height="14" fill="#000"/><rect x="60" y="49" width="12" height="12" fill="#808000"/><rect x="62" y="49" width="8" height="6" fill="#e8e8f8"/><rect x="70" y="49" width="1" height="7" fill="#000"/><rect x="71" y="49" width="1" height="1" fill="#fff"/><rect x="62" y="57" width="9" height="4" fill="#000"/><rect x="68" y="58" width="2" height="3" fill="#c0c0c0"/></g>
<path d="M63.8 55V51.5Q63.8 49.6 66 49.6Q68.2 49.6 68.2 51.5V55M63.8 52.8H68.2" stroke="#0000ff" stroke-width="1.100" fill="none"/>
<g shape-rendering="crispEdges"><rect x="83" y="47" width="14" height="14" fill="#000"/><rect x="84" y="48" width="12" height="12" fill="#808000"/><rect x="86" y="48" width="8" height="6" fill="#c0c0c0"/><rect x="94" y="48" width="1" height="7" fill="#000"/><rect x="95" y="48" width="1" height="1" fill="#fff"/><rect x="86" y="56" width="9" height="4" fill="#000"/><rect x="92" y="57" width="2" height="3" fill="#c0c0c0"/></g>
<g shape-rendering="crispEdges"><path d="M89.5 52.5H96.5L98.5 54.5V62.5H89.5Z" fill="#f0f0e8" stroke="#000"/><rect x="91" y="55" width="5" height="2" fill="#404040"/><rect x="91" y="58" width="6" height="1" fill="#404040"/><rect x="91" y="60" width="1" height="1" fill="#000"/><rect x="93" y="60" width="1" height="1" fill="#000"/><rect x="95" y="60" width="1" height="1" fill="#000"/></g>
<g shape-rendering="crispEdges"><rect x="108" y="47" width="14" height="14" fill="#000"/><rect x="109" y="48" width="12" height="12" fill="#808000"/><rect x="111" y="48" width="8" height="6" fill="#c0c0c0"/><rect x="119" y="48" width="1" height="7" fill="#000"/><rect x="120" y="48" width="1" height="1" fill="#fff"/><rect x="111" y="56" width="9" height="4" fill="#000"/><rect x="117" y="57" width="2" height="3" fill="#c0c0c0"/></g>
<rect x="113.5" y="53.5" width="10" height="9" fill="#000080" stroke="#000" shape-rendering="crispEdges"/><path d="M115.5 60Q116.5 56.2 119 56.2Q121.5 56.2 122.5 59.5" fill="none" stroke="#00ffff" stroke-width="1.4"/>
<g><path d="M136.5 57V61.5H146.5L147.5 60.5V49.5L145 48" fill="#fff" stroke="#000" stroke-dasharray="1 1"/><path d="M138 48.5H146L142 56H133.5Z" fill="#c8c8c8" stroke="#606060" stroke-width="0.6"/><path d="M133 56.5H142.2L146.2 48.8" fill="none" stroke="#008080" stroke-width="1.3"/><path d="M138 47.5h2m1 0h2m1 0h2" stroke="#000" stroke-width="1.2"/><path d="M140 51.5h4" stroke="#404040" stroke-width="1.6"/><path d="M137 58.5h9M137 60h9" stroke="#c0c0c0" stroke-width="0.8"/></g>
<g><path d="M163 48.5H171.5L169 54H160.5Z" fill="#fff" stroke="#000"/><path d="M163.5 50.5h5M162.5 52.5h5" stroke="#000" stroke-width="0.8"/><path d="M158.5 56.5L160.5 54.5H171L173.5 56.5V60L171.5 61.5H159.5L158.5 60.5Z" fill="#c8c8c8" stroke="#000"/><path d="M159 57.5H171.5" stroke="#000"/><path d="M159.500 60.500H171" stroke="#404040" stroke-width="0.800"/><rect x="165" y="58.3" width="3" height="1.4" fill="#e0e000"/><path d="M171.5 57.5l2-1.5M171.5 61l2-1.5" stroke="#000" stroke-dasharray="1 1"/></g>
<g shape-rendering="crispEdges"><path d="M196.5 49.5H197.5V48.5H202.5V49.5H209.5V61.5H196.5Z" fill="url(#dy)" stroke="#000"/></g>
<path d="M199 54l2 2.2l4-4.4M202 58l2 2.2l4-4.4" stroke="#000" stroke-width="1.400" fill="none"/>
<g shape-rendering="crispEdges"><rect x="232" y="47" width="4" height="16" fill="#000"/><rect x="244" y="47" width="4" height="16" fill="#000"/><rect x="235" y="49" width="10" height="11" fill="#000"/><rect x="236" y="50" width="8" height="9" fill="#000080"/>
<rect x="233" y="48" width="2" height="2" fill="#fff"/><rect x="245" y="48" width="2" height="2" fill="#fff"/>
<rect x="233" y="51" width="2" height="2" fill="#fff"/><rect x="245" y="51" width="2" height="2" fill="#fff"/>
<rect x="233" y="54" width="2" height="2" fill="#fff"/><rect x="245" y="54" width="2" height="2" fill="#fff"/>
<rect x="233" y="57" width="2" height="2" fill="#fff"/><rect x="245" y="57" width="2" height="2" fill="#fff"/>
<rect x="233" y="60" width="2" height="2" fill="#fff"/><rect x="245" y="60" width="2" height="2" fill="#fff"/>
</g><path d="M237 56Q238 52.5 240.5 52.5Q243 52.5 243.5 55.5" fill="none" stroke="#00ffff" stroke-width="1.4"/>
<g><rect x="257.300" y="48.300" width="15.400" height="13.400" rx="1.5" fill="url(#gcam)" stroke="#8c8c94" stroke-width="0.800"/><rect x="262" y="48" width="5" height="2" fill="#9090a0"/><circle cx="266.5" cy="56" r="4.800" fill="#70707c"/><circle cx="266.5" cy="56" r="3.800" fill="url(#glens)"/><rect x="258.500" y="49.500" width="3" height="2" fill="#f4f4f8"/></g>
<g><path d="M284 55.500L288.500 50.500L296.500 49.500L291 55.300Z" fill="url(#dy)" stroke="#000" stroke-width="0.900"/><path d="M291 55.300L296.500 49.500V53L291 59Z" fill="#e0e000" stroke="#000" stroke-width="0.900"/><path d="M284 55.500H291V59H285Q283.500 58.500 283.700 56.500Z" fill="#f4f4f4" stroke="#000" stroke-width="0.900"/></g>
<path d="M307 55h5.4l-2.7 3.2z" fill="#000"/>
<path d="M332 53.5H334.5V47.5H338.5V53.5H341.5V47.5H345.5V53.5H347.5" fill="none" stroke="#000" stroke-width="1" shape-rendering="crispEdges"/>
<path d="M332.300 57.500Q333.800 53.500 335.300 57.800T337.800 62Q339.500 62 340.300 58T342.800 55.500Q344 55.500 345 59.500T347.500 59.500" fill="none" stroke="#000" stroke-width="1.300"/>
<path d="M357.500 50.800000000000004L359.300 48.9H360.800L361.800 49.9L362.800 48.9L363.800 49.9L364.5 48.800000000000004H366.5L367.5 47.6H369L373.3 51.2" fill="none" stroke="#000" stroke-width="1" stroke-linejoin="round" stroke-dasharray="2.200 0.800"/><path d="M363.7 48.6h3l-1.500 1.600z" fill="#000"/><path d="M369.5 49.300000000000004l2.500 2.200" stroke="#000" stroke-width="1.300"/>
<path d="M357.500 53.800000000000004L359.300 51.9H360.800L361.800 52.9L362.800 51.9L363.800 52.9L363.5 51.800000000000004H365.5L366.5 50.6H368L372.3 54.2" fill="none" stroke="#000" stroke-width="1" stroke-linejoin="round" stroke-dasharray="2.200 0.800"/><path d="M362.7 51.6h3l-1.500 1.600z" fill="#000"/><path d="M368.5 52.300000000000004l2.500 2.200" stroke="#000" stroke-width="1.300"/>
<path d="M357.500 56.800000000000004L359.300 54.9H360.800L361.800 55.9L362.800 54.9L363.800 55.9L362.5 54.800000000000004H364.5L365.5 53.6H367L371.3 57.2" fill="none" stroke="#000" stroke-width="1" stroke-linejoin="round" stroke-dasharray="2.200 0.800"/><path d="M361.7 54.6h3l-1.500 1.600z" fill="#000"/><path d="M367.5 55.300000000000004l2.500 2.200" stroke="#000" stroke-width="1.300"/>
<path d="M357.500 59.800000000000004L359.300 57.9H360.800L361.800 58.9L362.800 57.9L363.800 58.9L361.5 57.800000000000004H363.5L364.5 56.6H366L370.3 60.2" fill="none" stroke="#000" stroke-width="1" stroke-linejoin="round" stroke-dasharray="2.200 0.800"/><path d="M360.7 57.6h3l-1.500 1.600z" fill="#000"/><path d="M366.5 58.300000000000004l2.500 2.200" stroke="#000" stroke-width="1.300"/>
<path d="M357.500 62.800000000000004L359.300 60.9H360.800L361.800 61.9L362.800 60.9L363.800 61.9L360.5 60.800000000000004H362.5L363.5 59.6H365L369.3 63.2" fill="none" stroke="#000" stroke-width="1" stroke-linejoin="round" stroke-dasharray="2.200 0.800"/><path d="M359.7 60.6h3l-1.500 1.600z" fill="#000"/><path d="M365.5 61.300000000000004l2.500 2.200" stroke="#000" stroke-width="1.300"/>
<path d="M383 61.8H397.5Q391.5 60.5 390.8 54V47.5H389.7V54Q389 60.5 383 61.8Z" fill="#303030"/>
<path d="M407 49.2H411.5L422.8 61.3" fill="none" stroke="#000" stroke-width="1.6"/>
<path d="M432 61.5H448M434.5 47V61M437.5 53.5V61M440.5 56V61M443.5 58V61" fill="none" stroke="#000" stroke-width="1.1" shape-rendering="crispEdges"/>
<path d="M459.2 56Q460.2 51.5 462.5 51.8Q464.5 52 465.5 55.5T468.2 59Q470 59 470.8 55" fill="none" stroke="#000" stroke-width="1.8"/>
<g><path d="M482.5 55.5Q490 47.5 497.5 55.5" fill="none" stroke="#000" stroke-width="1.8"/><path d="M482.5 52.5l5 6M487 52.5l-5 5.5M497.5 57.5l-3-3" stroke="#000" stroke-width="1.2"/><path d="M486 56l5 5.5" stroke="#000" stroke-width="1.4"/><path d="M484 58Q490 53 496 58" fill="none" stroke="#808000" stroke-dasharray="1 1"/><path d="M489 55l1.5 2l1.5-2M493 56l-1 2" stroke="#808000" stroke-width="0.8" fill="none"/><circle cx="491" cy="61" r="1.2" fill="#f00"/><path d="M482.5 51h1M485.5 49h1M490 48h1M494.5 49h1M497 51.5h1" stroke="#0000ff" stroke-width="1.2"/></g>
<text x="508.3" y="54.9" font-family="Liberation Sans, sans-serif" font-weight="bold" font-size="10.5px" fill="#000" filter="url(#crisp)" >T</text>
<text x="515.3" y="62.9" font-family="Liberation Sans, sans-serif" font-weight="bold" font-size="11px" fill="#000" filter="url(#crisp)" >S</text>
<text x="531.8" y="55.7" font-family="Liberation Sans, sans-serif" font-weight="bold" font-size="11px" fill="#000" filter="url(#crisp)" textLength="11" lengthAdjust="spacingAndGlyphs">W</text>
<text x="541.6" y="62.9" font-family="Liberation Sans, sans-serif" font-weight="bold" font-size="11.5px" fill="#000" filter="url(#crisp)" >F</text>
<text x="556.2" y="57.7" font-family="Liberation Sans, sans-serif" font-weight="bold" font-size="11.5px" fill="#000" filter="url(#crisp)" >L</text>
<text x="563.3" y="57.7" font-family="Liberation Sans, sans-serif" font-weight="bold" font-size="9.5px" fill="#000" filter="url(#crisp)" textLength="5" lengthAdjust="spacingAndGlyphs">e</text>
<text x="568.6" y="57.7" font-family="Liberation Sans, sans-serif" font-weight="bold" font-size="9.5px" fill="#000" filter="url(#crisp)" textLength="5" lengthAdjust="spacingAndGlyphs">q</text>
<path d="M582.3 60.5H587V57H590.5V53.5H594V50H598" fill="none" stroke="#000" stroke-width="2" shape-rendering="crispEdges"/>
<text x="608.6" y="56.6" font-family="Liberation Sans, sans-serif" font-weight="bold" font-size="11px" fill="#fff" filter="url(#crisp)" >Q</text>
<text x="616.8" y="63.8" font-family="Liberation Sans, sans-serif" font-weight="bold" font-size="10.5px" fill="#fff" filter="url(#crisp)" >C</text>
<text x="607.6" y="55.6" font-family="Liberation Sans, sans-serif" font-weight="bold" font-size="11px" fill="#808080" filter="url(#crisp)" >Q</text>
<text x="615.8" y="62.8" font-family="Liberation Sans, sans-serif" font-weight="bold" font-size="10.5px" fill="#808080" filter="url(#crisp)" >C</text>
<g><rect x="648.5" y="48.5" width="11" height="10" fill="#000080" stroke="#000" shape-rendering="crispEdges"/><path d="M649.5 54.5Q650.5 50 653.5 50Q657 50.5 659 55.5" fill="none" stroke="#00ffff" stroke-width="1.3"/><path d="M645.5 49.5V57" stroke="#000"/><path d="M643.5 50.5l2-2.5l2 2.5zM643.5 55.8l2 2.5l2-2.5z" fill="#000"/><path d="M650 61.5H658.5" stroke="#000"/><path d="M650.5 59.5l-2.5 2l2.5 2zM657.8 59.5l2.5 2l-2.5 2z" fill="#000"/></g>
<circle cx="689" cy="55" r="7.8" fill="url(#ghelp)"/>
<text x="689" y="59.8" text-anchor="middle" font-family="Liberation Sans, sans-serif" font-weight="bold" font-size="13px" fill="#fff">?</text>
<text x="706.600" y="61.700" font-family="Liberation Sans, sans-serif" font-weight="bold" font-size="18.500px" textLength="7" lengthAdjust="spacingAndGlyphs" fill="#48b048" stroke="#000" stroke-width="2" paint-order="stroke">?</text>
<circle cx="717.2" cy="57.2" r="5" fill="url(#gglobe)" stroke="#001870" stroke-width="0.6"/><path d="M714.5 58.5l2-3l3-1l-1 3l-2.5 3z" fill="#30a030"/><path d="M719 59l1.5-1.5v2z" fill="#30a030"/>
<path d="M12.3 74.3L20.8 81.5L12.3 88.7Z" fill="url(#gplay)" stroke="#008000" stroke-width="0.8"/>
<g shape-rendering="crispEdges"><rect x="34" y="74" width="14" height="14" fill="#000"/><rect x="35" y="75" width="12" height="12" fill="#808000"/><rect x="37" y="75" width="8" height="6" fill="#e8e8f8"/><rect x="45" y="75" width="1" height="7" fill="#000"/><rect x="46" y="75" width="1" height="1" fill="#fff"/><rect x="37" y="83" width="9" height="4" fill="#000"/><rect x="43" y="84" width="2" height="3" fill="#c0c0c0"/></g>
<path d="M38.8 81V77.5Q38.8 75.6 41 75.6Q43.2 75.6 43.2 77.5V81M38.8 78.8H43.2" stroke="#0000ff" stroke-width="1.100" fill="none"/>
<path d="M58.5 75.5l1.5-.8l1.5 .8l1.5-.8l1.5 .8l1.5-.8l1.5 .8l1.8-2l1.8 0l1.8 1.5l1.5 1.8" fill="none" stroke="#ff0000" stroke-width="1.150"/>
<path d="M58.5 78.45l1.5-.8l1.5 .8l1.5-.8l1.5 .8l1.5-.8l1.5 .8l1.8-2l1.8 0l1.8 1.5l1.5 1.8" fill="none" stroke="#000000" stroke-width="1.150"/>
<path d="M58.5 81.4l1.5-.8l1.5 .8l1.5-.8l1.5 .8l1.5-.8l1.5 .8l1.8-2l1.8 0l1.8 1.5l1.5 1.8" fill="none" stroke="#00e000" stroke-width="1.150"/>
<path d="M58.5 84.35l1.5-.8l1.5 .8l1.5-.8l1.5 .8l1.5-.8l1.5 .8l1.8-2l1.8 0l1.8 1.5l1.5 1.8" fill="none" stroke="#0000ff" stroke-width="1.150"/>
<path d="M58.5 87.3l1.5-.8l1.5 .8l1.5-.8l1.5 .8l1.5-.8l1.5 .8l1.8-2l1.8 0l1.8 1.5l1.5 1.8" fill="none" stroke="#ff9000" stroke-width="1.150"/>
<path d="M91 81C89.500 78 88 76.800 86.500 76.800C84.500 76.800 83.900 79 83.900 81C83.900 83 84.800 85.200 86.800 85.200C88.500 85.200 89.800 83.500 91 81C92.500 78 94 76.800 95.500 76.800C97.500 76.800 98.400 79 98.400 81C98.400 83 97.500 85.200 95.500 85.200C94 85.200 92.500 84 91 81Z" fill="none" stroke="#600048" stroke-width="1.600"/>
<g><rect x="112.5" y="78.500" width="7" height="5" fill="#0000ff" stroke="#000080" shape-rendering="crispEdges"/><path d="M113.5 74l2.700 2.200l2.700-2.200M113.500 88l2.700-2.200l2.700 2.200" fill="none" stroke="#000080" stroke-width="1.2"/><path d="M114.500 76.800h3.500M114.500 85.300h3.500" stroke="#000080" stroke-width="1"/></g>
<path d="M135.200 76.500h4M143 76.500h4.500M145.200 74v1.200M145.200 77.800v1.200M134.800 84.500l1.500 0l1.500 3l1.200-5.500h2M142.200 85.500h5.500M145 82.800v5.500" fill="none" stroke="#000" stroke-width="1.2"/>
<g shape-rendering="crispEdges"><path d="M159.5 75.5H160.5V74.5H165.5V75.5H172.5V87.5H159.5Z" fill="url(#dy)" stroke="#000"/></g>
<path d="M162 80l2 2.2l4-4.4M165 84l2 2.2l4-4.4" stroke="#000" stroke-width="1.400" fill="none"/>
<path d="M191 87.500H193.500V74.500H195.500V87.500H207" fill="none" stroke="#000" stroke-width="1.1" shape-rendering="crispEdges"/>
<path d="M217 84L222.800 78H225.500L230.500 83.200H233.200" fill="none" stroke="#000" stroke-width="1.2"/>
<g fill="none" stroke="#000"><path d="M256.700 74.500V87.500" stroke-width="1.6"/><path d="M254.500 74.800h4.500M254.500 87.500h4.500" stroke-width="1.1"/><ellipse cx="256.700" cy="81" rx="3.800" ry="4.200" stroke-width="1.3"/></g>
<path d="M274.300 78.200Q279 79 282.200 87.800V73.800Q287.500 76 290 85.200" fill="none" stroke="#000" stroke-width="1.200"/>
<g><circle cx="306.600" cy="81.200" r="6.500" fill="#fff" stroke="#505030" stroke-width="2.600"/><path d="M306.600 76.200v1.300M306.600 85v1.300M301.600 81.200h1.300M310.400 81.200h1.300M303.100 77.700l.9 .9M310.100 77.700l-.9 .9M303.100 84.700l.9-.9M310.100 84.700l-.9-.9" stroke="#000" stroke-width="1"/><path d="M306.600 81.500L302.600 78" stroke="#f00" stroke-width="1.1"/><path d="M306.600 81.500L311 77.800" stroke="#00f" stroke-width="1.1"/></g>
<rect x="877" y="15" width="6" height="2" fill="#000" shape-rendering="crispEdges"/>
<path d="M911 9.5l7 7M918 9.5l-7 7" stroke="#000" stroke-width="1.700"/>
<rect x="877" y="34" width="6" height="2" fill="#000" shape-rendering="crispEdges"/>
<path d="M911 28.5l7 7M918 28.5l-7 7" stroke="#000" stroke-width="1.700"/>
<path d="M892.500 8.500h8v8h-8z" fill="none" stroke="#000" stroke-width="1" shape-rendering="crispEdges"/><rect x="892" y="8" width="9" height="2" fill="#000" shape-rendering="crispEdges"/>
<g shape-rendering="crispEdges" fill="none" stroke="#000"><path d="M894.500 28.500h6v5h-6z"/><path d="M894 29.500h7"/><path d="M892.500 31.500h6v5h-6z" fill="#d4d0c8"/><path d="M892 32.500h7"/></g>
<g fill="none" stroke="#b8bcc0"><path d="M10.5 6Q5 11 8 16.500T20.500 19.500" stroke-width="3.600" stroke-dasharray="1.300 0.900" opacity="0.750"/><path d="M9 7Q6 12 9 16T19 19.800" stroke="#50609a" stroke-width="0.800"/><path d="M12 17.500Q16 20.500 21 17" stroke-width="2" stroke-dasharray="1.300 0.900" opacity="0.800"/></g>
<text x="10.300" y="16.500" font-family="Liberation Sans, sans-serif" font-weight="bold" font-size="15px" fill="#000" stroke="#b88428" stroke-width="1.300" paint-order="stroke">C</text>
<g><rect x="8.500" y="24.500" width="15" height="15" fill="#fff" stroke="#000" shape-rendering="crispEdges"/><text x="9.600" y="31.900" font-family="Liberation Sans, sans-serif" font-size="10px" fill="#000" textLength="13.400" lengthAdjust="spacingAndGlyphs" stroke="#000" stroke-width="0.350">mls</text><path d="M9.500 35.400H13L15.500 35.600" fill="none" stroke="#000" stroke-width="1"/><path d="M9.500 33.600H12.800L16.800 38.300L18.400 33.300L19.800 34.600" fill="none" stroke="#f00000" stroke-width="1.300"/><path d="M19.500 34.300L21.800 36.600" stroke="#000" stroke-width="1.100"/><circle cx="22.300" cy="36.500" r="0.900" fill="#f00000"/></g>
<path d="M108 637.0H114.5V629.0H118.5V637.0H124" fill="none" stroke="#000" stroke-width="1" shape-rendering="crispEdges"/>
<path d="M108 637.5H114M119 637.5H124" stroke="#000" shape-rendering="crispEdges"/>
<path d="M349 637.0H355.5V629.0H359.5V637.0H365" transform="translate(1,1)" fill="none" stroke="#fff" shape-rendering="crispEdges"/>
<path d="M349 637.0H355.5V629.0H359.5V637.0H365" fill="none" stroke="#808080" shape-rendering="crispEdges"/>
<path d="M196 639.5h11l-5.500-5.500z" fill="#000"/>
<path d="M221 635h11l-5.500 5.500z" fill="#000"/>
<path d="M438 640.5h11l-5.500-5.500z" fill="#fff"/>
<path d="M463 636h11l-5.500 5.500z" fill="#fff"/>
<path d="M437 639.5h11l-5.500-5.500z" fill="#808080"/>
<path d="M462 635h11l-5.500 5.500z" fill="#808080"/>
<path d="M720.5 635h11l-5.500 5.500z" fill="#000"/>
<path d="M745.5 639.5h11l-5.500-5.500z" fill="#000"/>
<text x="485.200" y="641" font-family="Liberation Sans, sans-serif" font-size="11px" fill="#fff" textLength="16" lengthAdjust="spacingAndGlyphs">A-B</text><text x="484.200" y="640" font-family="Liberation Sans, sans-serif" font-size="11px" fill="#909090" textLength="16" lengthAdjust="spacingAndGlyphs">A-B</text>
<g><path d="M516.200 638.800L519.500 634.800L524.300 638.800L529.500 634.800" fill="none" stroke="#000080" stroke-width="2.400" stroke-linejoin="round"/><path d="M520.800 631.800l2.200-2.300l2.200 2.300" fill="none" stroke="#000080" stroke-width="1.100"/><path d="M521.800 632.500h2.500" stroke="#d8d800" stroke-width="1.200"/><path d="M520.800 644.800l2.200-2.300l2.200 2.300" fill="none" stroke="#000080" stroke-width="1.100"/><path d="M521.800 645h2.500" stroke="#d8d800" stroke-width="1.200"/><rect x="522.300" y="630" width="1.400" height="1.200" fill="#d8d800"/><rect x="522.300" y="643" width="1.400" height="1.200" fill="#d8d800"/></g>
<g fill="none" stroke="#000" stroke-width="1.05"><path d="M557.5 639.0A5.2 5.2 0 0 0 549.8 634.0"/><path d="M547.0999999999999 638.0A5.2 5.2 0 0 0 554.8 643.0"/></g><path d="M546.5 634.2l3.400-2.300v4.600z" fill="#000"/><path d="M558.0999999999999 643.0l-3.400-2.300v4.600z" fill="#000"/>
<g fill="none" stroke="#000" stroke-width="1.100"><rect x="557.600" y="629.500" width="2.400" height="5" rx="1.200" fill="#d4d0c8"/><path d="M555.800 633Q556 636.500 558.800 636.500T561.800 633M558.800 636.500v2.500"/></g>
<g fill="none" stroke="#808080" stroke-width="1.05"><path d="M582 639.3A5 5 0 0 0 574.5 634.3"/><path d="M572 638.3A5 5 0 0 0 579.5 643.3"/></g><path d="M571.2 634.5l3.400-2.300v4.600z" fill="#808080"/><path d="M582.8 643.3l-3.400-2.300v4.600z" fill="#808080"/>
<g fill="none" stroke="#808080" stroke-width="1" shape-rendering="crispEdges"><rect x="581.500" y="630.500" width="5" height="6" fill="#e8e6e0"/><path d="M582 632.500h4.500M582 634.500h4.500M584.500 637v4.500h-2"/></g>
<g><rect x="768.500" y="634.300" width="3.500" height="4.600" rx="1.200" fill="#c0c0c0" stroke="#000" stroke-width="0.900"/><ellipse cx="775.400" cy="636.500" rx="3.500" ry="7.300" fill="#a8a8a8" stroke="#000" stroke-width="1.100"/><ellipse cx="776.300" cy="636.500" rx="1.700" ry="6" fill="#d0d0d0" stroke="#404040" stroke-width="0.700"/><path d="M772 636.500h4" stroke="#000" stroke-width="0.800"/></g>
<path d="M792.800 636.800h5.600l-2.800 3.200z" fill="#000"/>
<g shape-rendering="crispEdges" fill="#000"><rect x="807" y="634" width="14" height="2"/><rect x="807" y="638" width="4" height="2"/><rect x="812" y="638" width="4" height="2"/><rect x="817" y="638" width="4" height="2"/></g>
<g><circle cx="841.5" cy="633.0" r="3.300" fill="#00e000" stroke="#000" stroke-width="0.500"/><path d="M841.5 636.0V641.5" stroke="#000" stroke-width="2.400"/><path d="M841.5 641.5V644.0H848.5V640.5" fill="none" stroke="#000" stroke-width="1.100"/></g>
<g fill="none" stroke="#000" stroke-width="1"><path d="M848 632.500Q848 629.500 849.500 629.500T851 632.500V634.500" fill="#fff"/><rect x="846.500" y="634.500" width="6" height="3.500" fill="#fff"/><path d="M847.500 638v2.500h4v-2.500"/></g>
<g><circle cx="866.5" cy="633.0" r="3.300" fill="#ff0000" stroke="#000" stroke-width="0.500"/><path d="M866.5 636.0V641.5" stroke="#000" stroke-width="2.400"/><path d="M866.5 641.5V644.0H873.5V640.5" fill="none" stroke="#000" stroke-width="1.100"/></g>
<g fill="none" stroke="#000" stroke-width="1" shape-rendering="crispEdges"><rect x="872.500" y="629.500" width="5" height="7" fill="#e8e8e8"/><path d="M873 632.500h4.500M871.500 638v2.500h4v-2.500"/></g>
<g shape-rendering="crispEdges"><path d="M889.500 631.500H890.500V630.500H895.500V631.500H902.500V642.500H889.500Z" fill="url(#dy)" stroke="#000"/></g><path d="M892.500 636.500l2 2l4.500-4.500M894.500 640l1.500 1.500l4-4" stroke="#000" stroke-width="1.500" fill="none"/><path d="M888.500 633.500v10" stroke="#605820" stroke-width="2"/><circle cx="888.500" cy="633" r="1.500" fill="#000"/>
<g shape-rendering="crispEdges"><rect x="918.500" y="634.500" width="7" height="8" fill="#fff" stroke="#000"/><rect x="921" y="637" width="4" height="4" fill="#f00"/><path d="M919.500 633.500h5" stroke="#000"/></g>
</g></svg>
</div></body></html>
